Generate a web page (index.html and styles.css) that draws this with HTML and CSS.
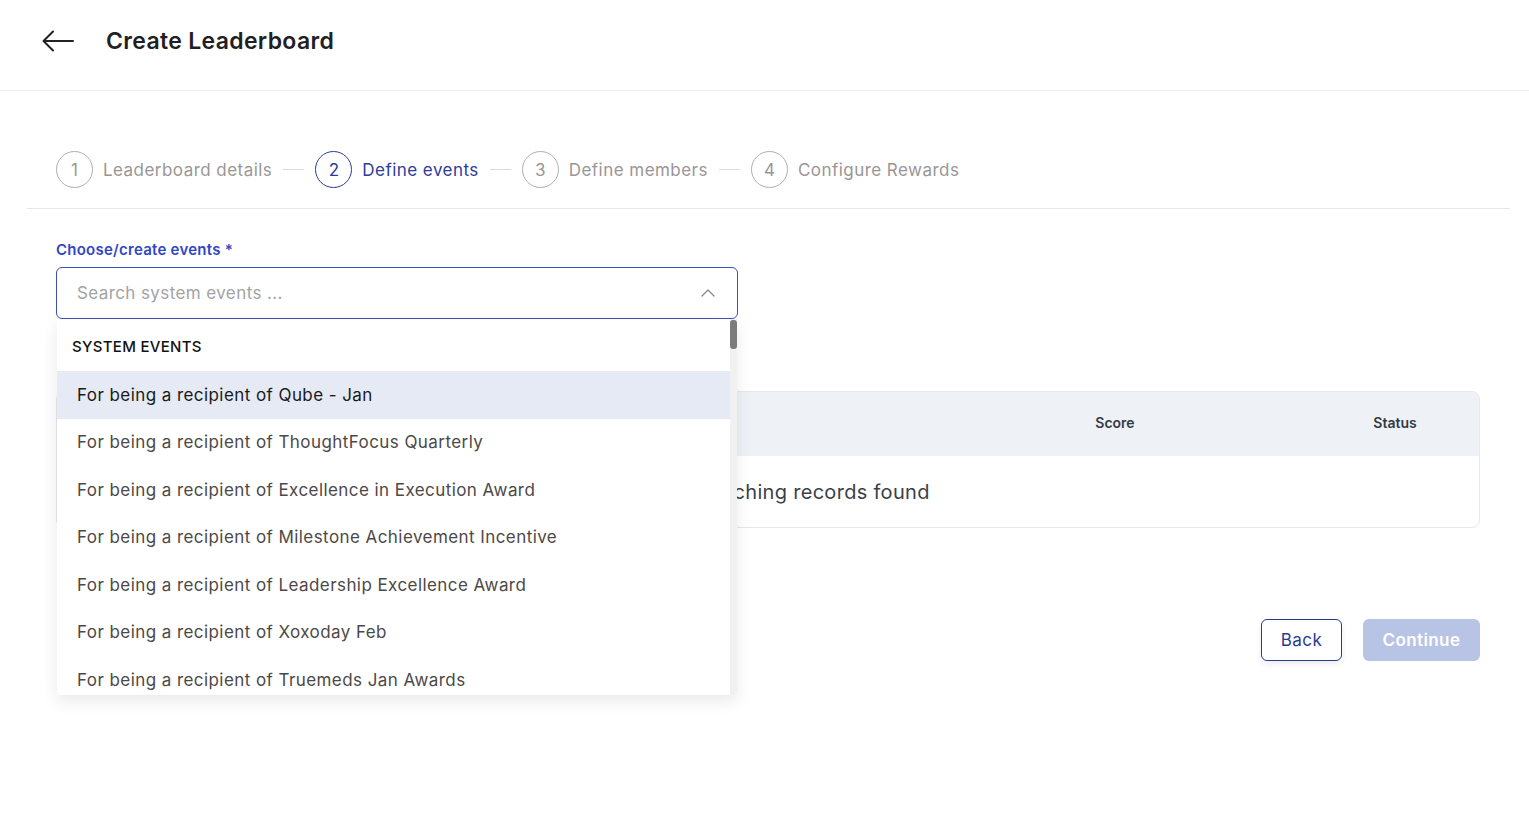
FILE: index.html
```html
<!DOCTYPE html>
<html lang="en">
<head>
  <meta charset="UTF-8">
  <meta name="viewport" content="width=device-width, initial-scale=1.0">
  <title>Create Leaderboard</title>
  <link rel="stylesheet" href="styles.css">
</head>
<body>
  <header class="topbar">
    <button class="topbar__back" aria-label="Back">
      <svg width="32" height="22" viewBox="0 0 32 22" fill="none" stroke="#222" stroke-width="2" stroke-linecap="round" stroke-linejoin="round">
        <path d="M31 11H2"/>
        <path d="M11 1.5L1.5 11L11 20.5"/>
      </svg>
    </button>
    <h1 class="topbar__title">Create Leaderboard</h1>
  </header>

  <nav class="stepper">
    <div class="step"><span class="step__num">1</span><span class="step__label">Leaderboard details</span></div>
    <span class="step__line"></span>
    <div class="step step--active"><span class="step__num">2</span><span class="step__label">Define events</span></div>
    <span class="step__line"></span>
    <div class="step"><span class="step__num">3</span><span class="step__label">Define members</span></div>
    <span class="step__line"></span>
    <div class="step"><span class="step__num">4</span><span class="step__label">Configure Rewards</span></div>
  </nav>

  <main class="content">
    <label class="field__label">Choose/create events *</label>
    <div class="select">
      <div class="select__input">
        <span class="select__placeholder">Search system events ...</span>
        <svg class="select__chevron" width="14" height="8" viewBox="0 0 14 8" fill="none" stroke="#8a8a8a" stroke-width="1.4" stroke-linecap="round" stroke-linejoin="round">
          <path d="M1 7L7 1L13 7"/>
        </svg>
      </div>
      <div class="select__menu">
        <div class="select__list">
          <div class="select__group">SYSTEM EVENTS</div>
          <div class="select__option select__option--hover">For being a recipient of Qube - Jan</div>
          <div class="select__option">For being a recipient of ThoughtFocus Quarterly</div>
          <div class="select__option">For being a recipient of Excellence in Execution Award</div>
          <div class="select__option">For being a recipient of Milestone Achievement Incentive</div>
          <div class="select__option">For being a recipient of Leadership Excellence Award</div>
          <div class="select__option">For being a recipient of Xoxoday Feb</div>
          <div class="select__option">For being a recipient of Truemeds Jan Awards</div>
        </div>
        <div class="select__scroll"><span class="select__thumb"></span></div>
      </div>
    </div>

    <div class="table">
      <div class="table__head">
        <span class="table__col table__col--name"></span>
        <span class="table__col table__col--score">Score</span>
        <span class="table__col table__col--status">Status</span>
      </div>
      <div class="table__empty">No matching records found</div>
    </div>

    <div class="actions">
      <button class="btn btn--outline">Back</button>
      <button class="btn btn--primary" disabled>Continue</button>
    </div>
  </main>
</body>
</html>
```

FILE: styles.css
```css
* { box-sizing: border-box; }

body {
  margin: 0;
  min-height: 100vh;
  font-family: 'Inter', 'Noto Sans', sans-serif;
  color: #222;
  background: #fff;
}

.topbar {
  height: 91px;
  display: flex;
  align-items: center;
  padding: 0 0 8px 42px;
  border-bottom: 1px solid #f1f1f1;
}
.topbar__back {
  border: 0;
  background: none;
  padding: 0;
  display: flex;
  cursor: pointer;
}
.topbar__title {
  margin: 0 0 0 32px;
  font-size: 23px;
  font-weight: 600;
  letter-spacing: 0.33px;
  color: #1f1f24;
}

/* steps */
.stepper {
  display: flex;
  align-items: center;
  gap: 11px;
  margin: 60px 19px 0 27px;
  padding: 0 0 20px 29px;
  border-bottom: 1px solid #e6e6e6;
}
.step {
  display: flex;
  align-items: center;
  gap: 10px;
  color: #9a9696;
}
.step__num {
  width: 37px;
  height: 37px;
  border: 1.3px solid #b0aeae;
  border-radius: 50%;
  display: flex;
  align-items: center;
  justify-content: center;
  font-size: 17px;
}
.step__label {
  font-size: 17px;
  letter-spacing: 0.46px;
}
.step__line {
  width: 21px;
  height: 1px;
  background: #d9d9d9;
}
.step--active { color: #2b3d9b; }
.step--active .step__num { border-color: #2b3d9b; }

.content {
  padding: 31px 49px 0 56px;
}
.field__label {
  display: block;
  font-size: 15px;
  font-weight: 600;
  letter-spacing: 0.25px;
  color: #3147c4;
  margin-bottom: 8px;
}

/* select */
.select { position: relative; }
.select__input {
  height: 52px;
  width: 682px;
  border: 1px solid #3d4fb8;
  border-radius: 6px;
  display: flex;
  align-items: center;
  justify-content: space-between;
  padding: 0 22px 0 20px;
}
.select__placeholder {
  font-size: 17px;
  letter-spacing: 0.4px;
  color: #a3a3a3;
}
.select__menu {
  position: absolute;
  top: 52px;
  left: 1px;
  width: 680px;
  height: 376px;
  background: #fff;
  display: flex;
  overflow: hidden;
  box-shadow: 0 6px 16px rgba(0, 0, 0, 0.09);
  border-radius: 0 0 4px 4px;
  z-index: 5;
}
.select__list { flex: 1; }
.select__group {
  height: 52px;
  display: flex;
  align-items: center;
  padding: 2px 0 0 15px;
  font-size: 15px;
  font-weight: 500;
  letter-spacing: 0.3px;
  color: #111;
}
.select__option {
  height: 47.5px;
  display: flex;
  align-items: center;
  padding-left: 20px;
  font-size: 17px;
  letter-spacing: 0.43px;
  color: #4d4848;
  white-space: nowrap;
}
.select__option--hover {
  background: #e5eaf5;
  color: #1a1a1a;
}
.select__scroll {
  width: 7px;
  background: #f1f1f1;
  display: flex;
  flex-direction: column;
}
.select__thumb {
  height: 29px;
  margin-top: 1px;
  background: #7c7c7c;
  border-radius: 3px;
}

/* table */
.table {
  margin-top: 72px;
  border: 1px solid #e6e8ec;
  border-radius: 8px;
  overflow: hidden;
}
.table__head {
  height: 64px;
  display: flex;
  align-items: center;
  padding-bottom: 3px;
  background: #eef1f5;
  font-size: 14px;
  font-weight: 600;
  color: #333a45;
}
.table__col--name { flex: 1; }
.table__col--score { width: 100px; text-align: center; margin-right: 180px; }
.table__col--status { width: 100px; text-align: center; margin-right: 34px; }
.table__empty {
  height: 71px;
  display: flex;
  align-items: center;
  padding-left: 607px;
  font-size: 20px;
  letter-spacing: 0.3px;
  color: #3b3f48;
}

/* buttons */
.actions {
  display: flex;
  justify-content: flex-end;
  gap: 21px;
  margin-top: 91px;
}
.btn {
  height: 42px;
  border-radius: 6px;
  font-family: inherit;
  font-size: 17px;
  letter-spacing: 0.4px;
  padding: 0;
  cursor: pointer;
}
.btn--outline {
  background: #fff;
  border: 1.3px solid #2b3a8f;
  color: #2b3a8f;
  box-shadow: 0 3px 6px rgba(0, 0, 0, 0.08);
  width: 81px;
}
.btn--primary {
  background: #b8c4e6;
  border: 0;
  color: #fff;
  font-weight: 600;
  width: 117px;
}
```
